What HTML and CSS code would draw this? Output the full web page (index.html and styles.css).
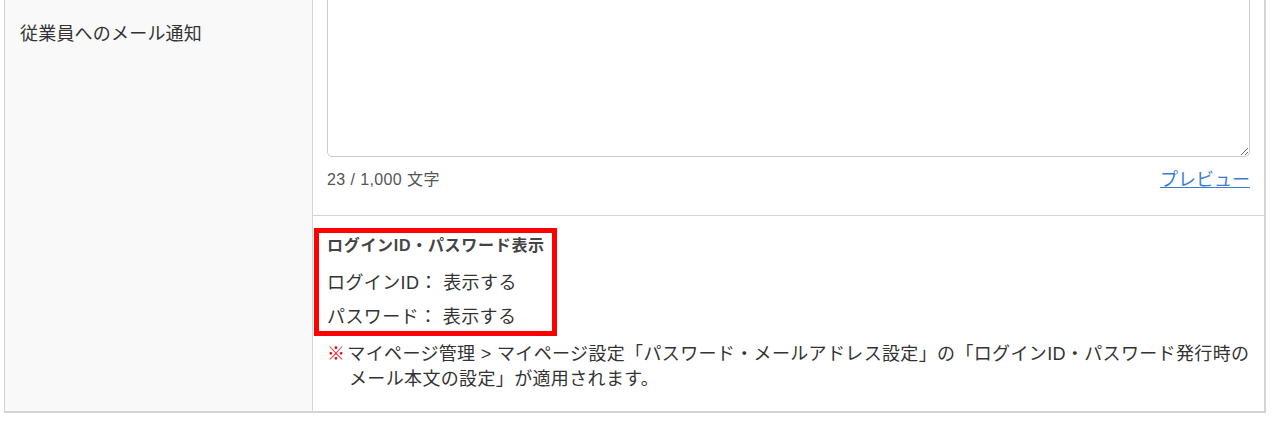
FILE: index.html
```html
<!DOCTYPE html>
<html lang="ja">
<head>
  <meta charset="UTF-8">
  <title>従業員へのメール通知</title>
  <link rel="stylesheet" href="styles.css">
</head>
<body>

  <div class="form-table">
    <div class="form-label">従業員へのメール通知</div>
    <div class="form-field">
      <div class="section">
        <textarea class="mail-body" rows="6"></textarea>
        <div class="counter-row">
          <span class="counter">23 / 1,000 文字</span>
          <a href="#" class="preview">プレビュー</a>
        </div>
      </div>
      <div class="section section-login">
        <div class="highlight">
          <p class="login-title">ログインID・パスワード表示</p>
          <p class="login-item">ログインID： 表示する</p>
          <p class="login-item">パスワード： 表示する</p>
        </div>
        <p class="note"><span class="mark">※</span>マイページ管理 &gt; マイページ設定「パスワード・メールアドレス設定」の「ログインID・パスワード発行時のメール本文の設定」が適用されます。</p>
      </div>
    </div>
  </div>

</body>
</html>
```

FILE: styles.css
```css
body {
  margin: 0;
  font-family: "Liberation Sans", "Noto Sans CJK JP", sans-serif;
  background-color: #fff;
  color: #333;
}
.form-table {
  display: grid;
  grid-template-columns: 308px 1fr;
  width: 1262px;
  margin: -20px 0 0 4px;
  border: 1px solid #d4d4d4;
  border-width: 1px 2px 2px 1px;
  box-sizing: border-box;
}
.form-label {
  background-color: #f9f9f9;
  border-right: 1px solid #d4d4d4;
  padding: 40px 15px;
  font-size: 18px;
  line-height: 27px;
  letter-spacing: 0.2px;
}
.section {
  padding: 14px 14px 23px;
}
.mail-body {
  display: block;
  width: 100%;
  height: 162px;
  box-sizing: border-box;
  border: 1px solid #ccc;
  border-radius: 5px;
  font-family: inherit;
  font-size: 16px;
}
.counter-row {
  display: flex;
  justify-content: space-between;
  align-items: center;
  margin-top: 11px;
  line-height: 24px;
}
.counter {
  font-size: 16px;
  letter-spacing: 0.4px;
  color: #555;
}
.preview {
  font-size: 18px;
  color: #3d7bd6;
}
.section-login {
  border-top: 1px solid #d4d4d4;
  padding: 12px 14px 19px;
}
.highlight {
  display: inline-block;
  border: 5px solid #f00;
  margin-left: -13px;
  padding: 1px 7px 0 8px;
}
.highlight p {
  margin: 0;
}
.login-title {
  font-size: 16px;
  font-weight: bold;
  line-height: 24px;
  letter-spacing: 0.7px;
  color: #444;
}
.login-item {
  font-size: 18px;
  line-height: 28px;
  letter-spacing: 0.4px;
}
.login-title + .login-item {
  margin-top: 11px;
}
.login-item + .login-item {
  margin-top: 6px;
}
.note {
  margin: 6px 0 0;
  padding-left: 22px;
  text-indent: -22px;
  font-size: 18px;
  line-height: 25px;
  letter-spacing: 0.35px;
}
.mark {
  color: #e60012;
  margin-right: 2px;
}
```
